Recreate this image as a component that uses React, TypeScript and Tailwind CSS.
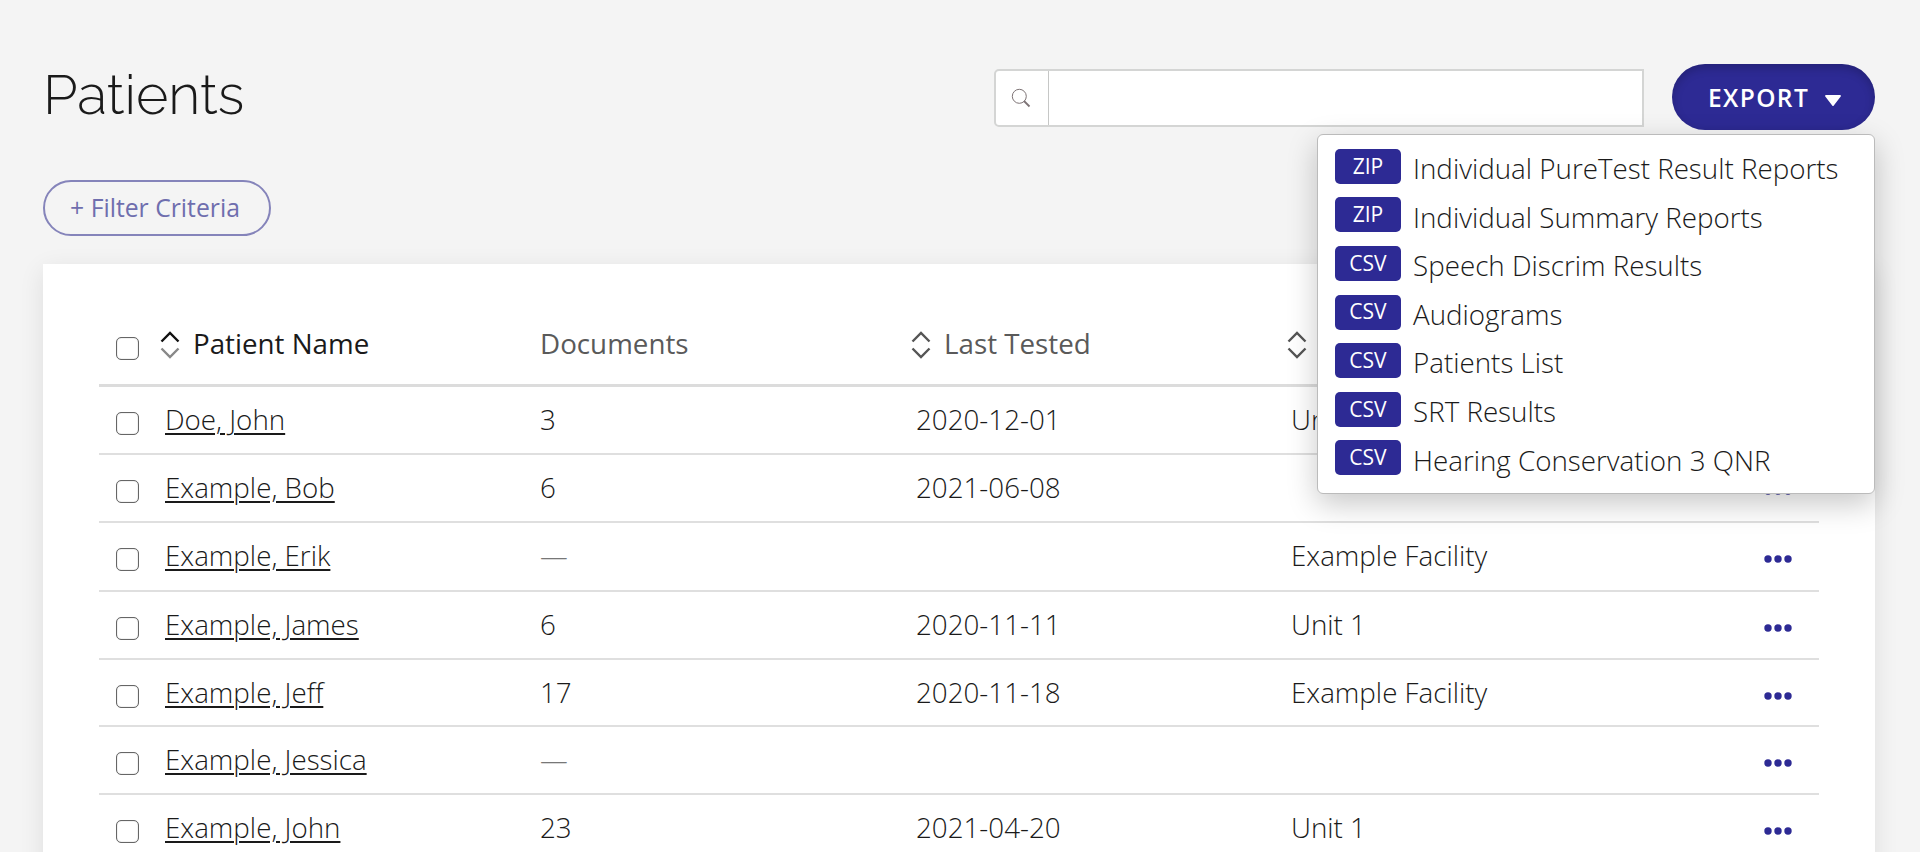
import { clsx } from "clsx";

interface Patient {
  name: string;
  documents?: string;
  lastTested?: string;
  facility?: string;
  height: string;
}

const patients: Patient[] = [
  { name: "Doe, John", documents: "3", lastTested: "2020-12-01", facility: "Unit 1", height: "h-[68px]" },
  { name: "Example, Bob", documents: "6", lastTested: "2021-06-08", height: "h-[68px]" },
  { name: "Example, Erik", facility: "Example Facility", height: "h-[69px]" },
  { name: "Example, James", documents: "6", lastTested: "2020-11-11", facility: "Unit 1", height: "h-[68px]" },
  { name: "Example, Jeff", documents: "17", lastTested: "2020-11-18", facility: "Example Facility", height: "h-[67px]" },
  { name: "Example, Jessica", height: "h-[68px]" },
  { name: "Example, John", documents: "23", lastTested: "2021-04-20", facility: "Unit 1", height: "h-[68px]" },
];

const exportOptions = [
  { type: "ZIP", label: "Individual PureTest Result Reports" },
  { type: "ZIP", label: "Individual Summary Reports" },
  { type: "CSV", label: "Speech Discrim Results" },
  { type: "CSV", label: "Audiograms" },
  { type: "CSV", label: "Patients List" },
  { type: "CSV", label: "SRT Results" },
  { type: "CSV", label: "Hearing Conservation 3 QNR" },
];

const columns = "grid grid-cols-[66px_375px_376px_376px_1fr_28px] pr-[27px]";

function Checkbox() {
  return (
    <input
      type="checkbox"
      className="block h-[23px] w-[23px] appearance-none rounded-[5px] border border-[#666] bg-white shadow-[inset_0_0_1px_#777]"
    />
  );
}

function SortIcon({ active = false }: { active?: boolean }) {
  return (
    <svg width="20" height="30" viewBox="0 0 20 30" fill="none" strokeWidth="2.4" className="mt-px shrink-0">
      <path d="M1.5 11.5 10 3l8.5 8.5" stroke={active ? "#111" : "#555"} />
      <path d="M1.5 18.5 10 27l8.5-8.5" stroke={active ? "#888" : "#555"} />
    </svg>
  );
}

function MoreIcon() {
  return (
    <svg width="28" height="8" viewBox="0 0 28 8" fill="#2d2a94">
      <circle cx="4" cy="4" r="3.7" />
      <circle cx="14" cy="4" r="3.7" />
      <circle cx="24" cy="4" r="3.7" />
    </svg>
  );
}

function SearchBox() {
  return (
    <div className="mt-[5px] flex h-[58px] w-[650px] rounded-l-[5px] border-2 border-[#d4d5d4] bg-white">
      <div className="flex w-[53px] items-center justify-center border-r border-[#c6c7c6]">
        <svg width="20" height="20" viewBox="0 0 20 20" fill="none" stroke="#7d7375" className="-ml-[3px]">
          <circle cx="8.3" cy="8.3" r="7" strokeWidth="1" />
          <path d="M13 13l5.5 5.5" strokeWidth="1.8" />
        </svg>
      </div>
      <input className="min-w-0 flex-1 outline-none" />
    </div>
  );
}

function ExportMenu() {
  return (
    <div className="relative ml-7">
      <button className="flex h-[66px] w-[203px] items-center rounded-full bg-[#2d2a94] pt-[3px] pl-[36px] text-[24.5px] font-semibold tracking-[1.4px] text-white shadow-[inset_0_4px_10px_rgba(0,0,0,0.2)]">
        EXPORT
        <svg width="16" height="11" viewBox="0 0 16 11" fill="#fff" className="mt-[3px] ml-4">
          <path d="M1 0h14a.9.9 0 0 1 .7 1.5L8.8 10.4a1 1 0 0 1-1.6 0L.3 1.5A.9.9 0 0 1 1 0z" />
        </svg>
      </button>
      <ul className="absolute top-[70px] right-0 h-[360px] w-[558px] rounded-md border border-[#bbb] bg-white pt-2 pl-[17px] shadow-[0_10px_30px_rgba(0,0,0,0.22)]">
        {exportOptions.map((option) => (
          <li key={option.label} className="flex h-[48.6px] items-center">
            <span className="-mt-0.5 mr-3 flex h-[35px] w-[66px] items-center justify-center rounded-[5px] bg-[#2d2a94] text-[21px] font-medium text-white">
              {option.type}
            </span>
            <span className="mt-[3px] whitespace-nowrap text-[27.75px] font-light">{option.label}</span>
          </li>
        ))}
      </ul>
    </div>
  );
}

export default function App() {
  return (
    <div className="h-[852px] overflow-hidden bg-[#f4f4f4] px-[43px] font-['Open_Sans',sans-serif] text-[#1a1a1a]">
      <header className="flex pt-16 pr-0.5">
        <h1 className="-mt-px mr-auto font-['Raleway',Lato,sans-serif] text-[55.5px] leading-[64px] font-light">Patients</h1>
        <SearchBox />
        <ExportMenu />
      </header>

      <button className="mt-[50px] block h-14 w-[228px] rounded-full border-2 border-[#8584ba] pr-1 text-[24.75px] text-[#6f6eae]">
        + Filter Criteria
      </button>

      <main className="mt-7 mr-0.5 h-[700px] bg-white px-14 shadow-[0_6px_24px_rgba(0,0,0,0.09)]">
        <div className={clsx(columns, "h-[123px] border-b-[3px] border-[#dcdcdc] text-[27.75px] text-[#5a5a5a]")}>
          <div className="pt-[73px] pl-[17px]"><Checkbox /></div>
          <div className="mt-[60px] -ml-[5px] flex h-10 items-center gap-[13px] text-[#1a1a1a]"><SortIcon active />Patient Name</div>
          <div className="mt-[59px] h-10 leading-10">Documents</div>
          <div className="mt-[60px] -ml-[5px] flex h-10 items-center gap-[13px]"><SortIcon />Last Tested</div>
          <div className="mt-[60px] -ml-[5px] flex h-10 items-center"><SortIcon /></div>
        </div>
        {patients.map((patient) => (
          <div
            key={patient.name}
            className={clsx(columns, patient.height, "border-b-2 border-[#dfdfdf] text-[27.75px] leading-[38px] font-light")}
          >
            <div className="pt-[25px] pl-[17px]"><Checkbox /></div>
            <div className="pt-[13px]">
              <a className="underline decoration-[1.5px] underline-offset-[3px]">{patient.name}</a>
            </div>
            <div className={clsx("pt-[13px]", !patient.documents && "text-[#777]")}>{patient.documents ?? "—"}</div>
            <div className="pt-[13px]">{patient.lastTested}</div>
            <div className="-ml-px pt-[13px]">{patient.facility}</div>
            <div className="pt-8"><MoreIcon /></div>
          </div>
        ))}
      </main>
    </div>
  );
}
